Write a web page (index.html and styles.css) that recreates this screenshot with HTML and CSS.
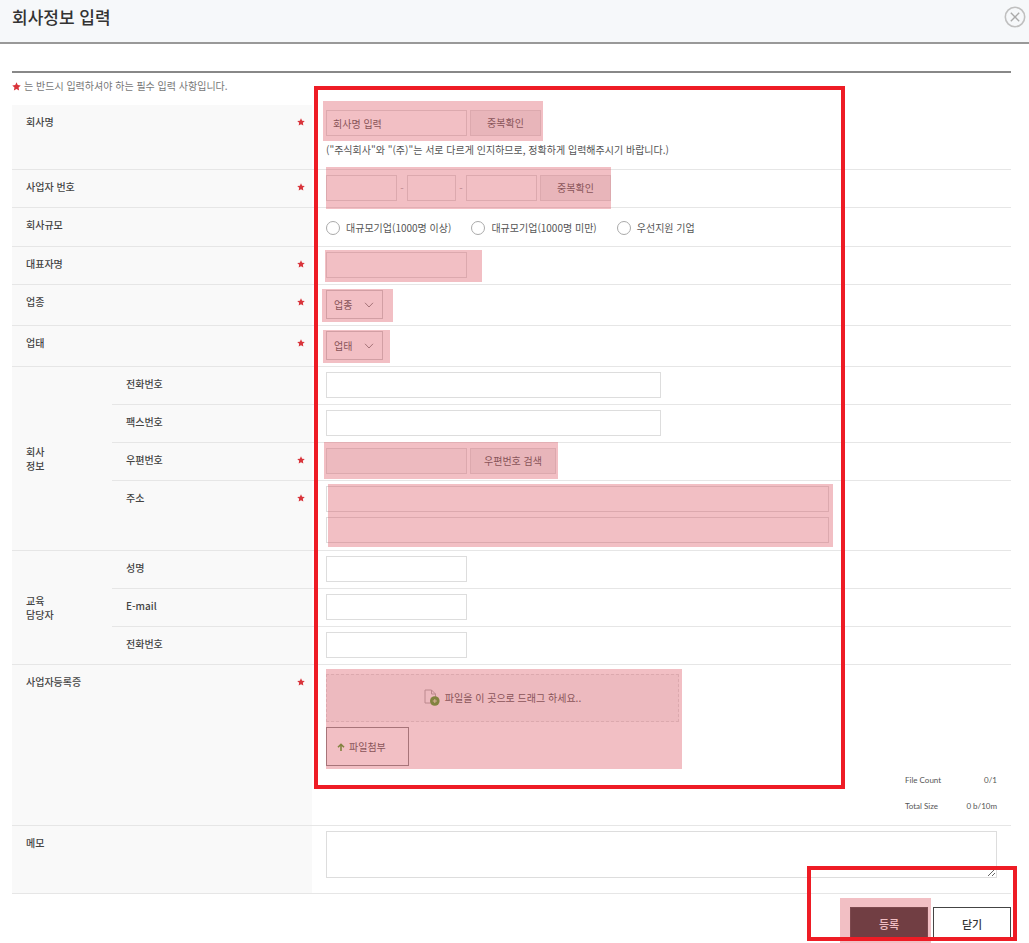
FILE: index.html
```html
<!DOCTYPE html>
<html lang="ko">
<head>
<meta charset="utf-8">
<title>회사정보 입력</title>
<link rel="stylesheet" href="styles.css">
</head>
<body>
<svg class="defs" aria-hidden="true">
  <symbol id="star" viewBox="0 0 10 10"><path d="M5 .4 6.4 3.4 9.7 3.8 7.3 6 7.9 9.4 5 7.8 2.1 9.4 2.7 6 .3 3.8 3.6 3.4Z"/></symbol>
</svg>
<header class="header">
  <h1 class="title">회사정보 입력</h1>
  <button class="close" type="button" aria-label="창 닫기">
    <svg viewBox="0 0 22 22" width="22" height="22"><circle cx="11" cy="11" r="9.7"/><path d="M6.8 6.8 15.2 15.2M15.2 6.8 6.8 15.2"/></svg>
  </button>
</header>
<form class="content">
  <p class="notice"><svg class="star star-large"><use href="#star"/></svg>는 반드시 입력하셔야 하는 필수 입력 사항입니다.</p>
  <table class="form-table">
    <colgroup><col class="col-group"><col class="col-label"><col></colgroup>
    <tbody>
      <tr>
        <th colspan="2"><div class="label"><label for="company">회사명</label><svg class="star"><use href="#star"/></svg></div></th>
        <td>
          <div class="fields mark mark-company"><input class="input" id="company" type="text" placeholder="회사명 입력"><button class="check" type="button">중복확인</button></div>
          <p class="hint">("주식회사"와 "(주)"는 서로 다르게 인지하므로, 정확하게 입력해주시기 바랍니다.)</p>
        </td>
      </tr>
      <tr>
        <th colspan="2"><div class="label"><label for="biz1">사업자 번호</label><svg class="star"><use href="#star"/></svg></div></th>
        <td>
          <div class="fields mark mark-number"><input class="input input-part" id="biz1" type="text"><span class="dash">-</span><input class="input input-short" type="text" aria-label="사업자 번호 둘째 자리"><span class="dash">-</span><input class="input input-part" type="text" aria-label="사업자 번호 셋째 자리"><button class="check" type="button">중복확인</button></div>
        </td>
      </tr>
      <tr>
        <th colspan="2"><div class="label">회사규모</div></th>
        <td>
          <div class="radios">
            <label class="radio"><input type="radio" name="size">대규모기업(1000명 이상)</label>
            <label class="radio"><input type="radio" name="size">대규모기업(1000명 미만)</label>
            <label class="radio"><input type="radio" name="size">우선지원 기업</label>
          </div>
        </td>
      </tr>
      <tr>
        <th colspan="2"><div class="label"><label for="ceo">대표자명</label><svg class="star"><use href="#star"/></svg></div></th>
        <td><div class="fields mark mark-ceo"><input class="input" id="ceo" type="text"></div></td>
      </tr>
      <tr>
        <th colspan="2"><div class="label"><label for="sector">업종</label><svg class="star"><use href="#star"/></svg></div></th>
        <td><div class="fields mark mark-select"><select class="select" id="sector"><option>업종</option></select><svg class="chevron" viewBox="0 0 10 6"><path d="M1 .8 5 5 9 .8"/></svg></div></td>
      </tr>
      <tr>
        <th colspan="2"><div class="label"><label for="type">업태</label><svg class="star"><use href="#star"/></svg></div></th>
        <td><div class="fields mark mark-select mark-type"><select class="select" id="type"><option>업태</option></select><svg class="chevron" viewBox="0 0 10 6"><path d="M1 .8 5 5 9 .8"/></svg></div></td>
      </tr>
      <tr>
        <th class="group" rowspan="4">회사<br>정보</th>
        <th><div class="label"><label for="tel">전화번호</label></div></th>
        <td><div class="fields"><input class="input input-wide" id="tel" type="text"></div></td>
      </tr>
      <tr>
        <th><div class="label"><label for="fax">팩스번호</label></div></th>
        <td><div class="fields"><input class="input input-wide" id="fax" type="text"></div></td>
      </tr>
      <tr>
        <th><div class="label"><label for="zip">우편번호</label><svg class="star"><use href="#star"/></svg></div></th>
        <td><div class="fields mark mark-zip"><input class="input input-gray" id="zip" type="text"><button class="check check-zip" type="button">우편번호 검색</button></div></td>
      </tr>
      <tr>
        <th><div class="label"><label for="addr">주소</label><svg class="star"><use href="#star"/></svg></div></th>
        <td class="address"><div class="stack mark mark-address"><input class="input input-full" id="addr" type="text"><input class="input input-full" type="text" aria-label="상세 주소"></div></td>
      </tr>
      <tr>
        <th class="group" rowspan="3">교육<br>담당자</th>
        <th><div class="label"><label for="manager">성명</label></div></th>
        <td><div class="fields"><input class="input" id="manager" type="text"></div></td>
      </tr>
      <tr>
        <th><div class="label"><label for="email">E-mail</label></div></th>
        <td><div class="fields"><input class="input" id="email" type="text"></div></td>
      </tr>
      <tr>
        <th><div class="label"><label for="mtel">전화번호</label></div></th>
        <td><div class="fields"><input class="input" id="mtel" type="text"></div></td>
      </tr>
      <tr>
        <th colspan="2"><div class="label">사업자등록증<svg class="star"><use href="#star"/></svg></div></th>
        <td class="upload">
          <div class="uploader mark mark-upload">
            <div class="dropzone">
              <svg viewBox="0 0 16 18" width="16" height="18"><path class="page" d="M10 14H1V1H7.5L11.5 5V8M7.5 1V5H11.5"/><circle cx="10.8" cy="12" r="4.8"/><path class="plus" d="M10.8 10V14M8.8 12H12.8"/></svg>
              <span>파일을 이 곳으로 드래그 하세요..</span>
            </div>
            <button class="attach" type="button"><svg viewBox="0 0 8 8" width="8" height="8"><path d="M4 8V1.5M1 4.3 4 1.3 7 4.3"/></svg>파일첨부</button>
          </div>
          <dl class="stats">
            <div><dt>File Count</dt><dd>0/1</dd></div>
            <div><dt>Total Size</dt><dd>0 b/10m</dd></div>
          </dl>
        </td>
      </tr>
      <tr>
        <th colspan="2"><div class="label"><label for="memo">메모</label></div></th>
        <td class="memo"><textarea class="textarea" id="memo"></textarea></td>
      </tr>
    </tbody>
  </table>
  <div class="actions">
    <div class="mark mark-submit"><button class="button button-primary" type="submit">등록</button></div>
    <button class="button" type="button">닫기</button>
  </div>
</form>
<div class="frame frame-fields"></div>
<div class="frame frame-actions"></div>
</body>
</html>
```

FILE: styles.css
```css
* { box-sizing: border-box; }

body {
  position: relative;
  min-height: 100vh;
  margin: 0;
  overflow: hidden;
  background: #fff;
  color: #555;
  font: 10px/14px "Noto Sans CJK KR", sans-serif;
}

h1, p, dl, dd { margin: 0; }

input, button, select, textarea {
  margin: 0;
  border-radius: 0;
  color: #555;
  font: inherit;
}

.defs { position: absolute; width: 0; height: 0; }

.header {
  display: flex;
  align-items: center;
  justify-content: space-between;
  height: 44px;
  padding: 0 3px 8px 12px;
  border-bottom: 2px solid #999;
  background: #f6f8fa;
}

.title { color: #333; font-size: 17px; font-weight: 500; line-height: 24px; }

.close { display: flex; padding: 0; border: 0; background: none; }
.close svg { fill: none; stroke: #c0c0c0; stroke-width: 1.6; }
.close path { stroke: #aaa; stroke-width: 1.4; }

.content {
  margin: 27px 18px 0 12px;
  border-top: 2px solid #888;
}

.notice {
  display: flex;
  align-items: center;
  gap: 3px;
  height: 32px;
  padding-bottom: 6px;
  color: #777;
}

.star { flex: none; width: 8px; height: 8px; fill: #d9343b; }
.star-large { width: 9px; height: 9px; }

.form-table { width: 100%; border-spacing: 0; table-layout: fixed; }
.col-group { width: 100px; }
.col-label { width: 200px; }

th {
  padding: 10px 7px 10px 14px;
  border-bottom: 1px solid #e6e6e6;
  background: #f9f9f9;
  color: #444;
  font-weight: 500;
  text-align: left;
  vertical-align: top;
}

.group { vertical-align: middle; }
.label { display: flex; align-items: center; justify-content: space-between; }

td {
  padding: 5px 14px 6px;
  border-bottom: 1px solid #e6e6e6;
  vertical-align: top;
}

.fields { display: flex; align-items: center; width: fit-content; }
.stack { display: flex; flex-direction: column; gap: 5px; max-width: 503px; }
.address { padding-bottom: 7px; }

.input {
  width: 141px;
  height: 26px;
  padding: 0 6px;
  border: 1px solid #ddd;
  background: #fff;
}
.input::placeholder { color: #555; opacity: 1; }
.input-part { width: 71px; }
.input-short { width: 49px; }
.input-wide { width: 335px; }
.input-full { width: 100%; }
.input-gray { background: #f7f7f7; }

.dash { width: 10px; color: #aaa; text-align: center; }

.check {
  width: 71px;
  height: 26px;
  margin-left: 3px;
  padding: 0;
  border: 1px solid #ddd;
  background: #f0f0f0;
}
.check-zip { width: 86px; }

.hint { margin: 5px 0 4px; line-height: 18px; }

.radios { display: flex; align-items: center; gap: 20px; height: 27px; padding-top: 2px; }
.radio { display: flex; align-items: center; gap: 6px; }
.radio input {
  width: 14px;
  height: 14px;
  border: 1px solid #aaa;
  border-radius: 50%;
  appearance: none;
}

.select {
  width: 57px;
  height: 29px;
  padding: 0 7px;
  border: 1px solid #ccc;
  background: #fff;
  appearance: none;
}
.chevron {
  width: 10px;
  height: 6px;
  margin-left: -19px;
  margin-right: 9px;
  fill: none;
  stroke: #888;
  pointer-events: none;
}

.upload { padding-top: 9px; }
.uploader { max-width: 353px; }
.dropzone {
  display: flex;
  align-items: center;
  justify-content: center;
  gap: 5px;
  height: 48px;
  border: 1px dashed #ddd;
  background: #f7f7f7;
}
.dropzone svg { fill: none; stroke: #aaa; }
.dropzone circle { fill: #4fa02e; stroke: none; }
.dropzone .plus { stroke: #d5e8b8; }

.attach {
  display: flex;
  align-items: center;
  gap: 4px;
  width: 83px;
  height: 39px;
  margin-top: 5px;
  padding: 0 10px;
  border: 1px solid #888;
  background: #fff;
}
.attach svg { fill: none; stroke: #4fa02e; stroke-width: 1.6; }

.stats { padding-top: 1px; font: 8px/26px Lato, sans-serif; }
.stats div { display: flex; justify-content: space-between; width: 92px; margin-left: auto; }

.memo { padding-bottom: 15px; }
.textarea { display: block; width: 100%; height: 47px; border: 1px solid #ddd; }

.actions { display: flex; justify-content: flex-end; gap: 5px; margin-top: 13px; }
.button {
  display: block;
  width: 78px;
  height: 34px;
  border: 1px solid #444;
  background: #fff;
  color: #333;
  font-size: 11px;
  font-weight: 500;
}
.button-primary { background: #333; color: #fff; }

/* Translucent highlight over the required controls */
.mark { position: relative; }
.mark::after {
  content: "";
  position: absolute;
  inset: 0;
  background: rgba(221, 81, 95, .37);
  pointer-events: none;
}
.mark-company::after { inset: -9px -2px -5px -3px; }
.mark-number::after { inset: -8px 0 -8px 0; }
.mark-ceo::after { inset: -2px -15px -4px -1px; }
.mark-select::after { inset: -1px -10px -3px -4px; }
.mark-type::after { inset: -1px -7px -3px -3px; }
.mark-zip::after { inset: -6px -2px -5px -2px; }
.mark-address::after { inset: -2px -4px -4px 2px; }
.mark-upload::after { inset: -5px -3px -3px 0; }
.mark-submit::after { inset: -9px -3px -9px -10px; }

.frame { position: absolute; border: 4px solid #ee1c25; pointer-events: none; }
.frame-fields { top: 86px; left: 314px; width: 531px; height: 703px; }
.frame-actions { top: 866px; right: 12px; width: 210px; height: 75px; }
```
